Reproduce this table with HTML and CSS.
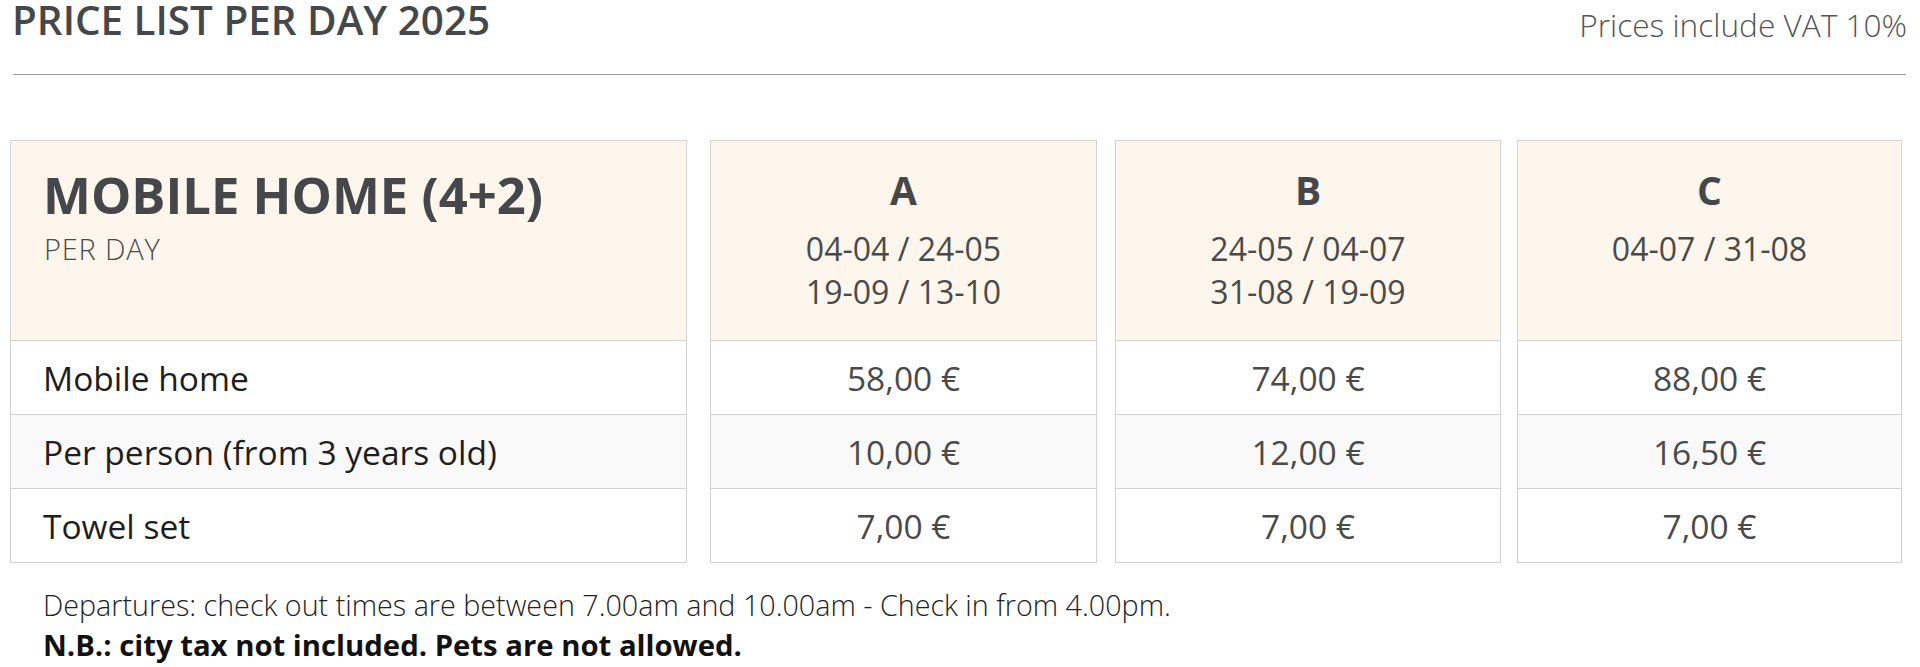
FILE: index.html
```html
<!DOCTYPE html>
<html lang="en">
<head>
<meta charset="utf-8">
<title>Price list per day 2025</title>
<link rel="stylesheet" href="styles.css">
</head>
<body>
<div class="page">
  <header class="top">
    <h1 class="title">PRICE LIST PER DAY 2025</h1>
    <p class="vat">Prices include VAT 10%</p>
  </header>
  <hr class="rule">

  <section class="prices">
    <div class="col col-label">
      <div class="head head-label">
        <h2 class="unit">MOBILE HOME (4+2)</h2>
        <p class="per">PER DAY</p>
      </div>
      <div class="cell label">Mobile home</div>
      <div class="cell label alt">Per person (from 3 years old)</div>
      <div class="cell label last">Towel set</div>
    </div>

    <div class="col col-a">
      <div class="head head-season">
        <div class="season">A</div>
        <div class="dates">04-04 / 24-05<br>19-09 / 13-10</div>
      </div>
      <div class="cell price">58,00 €</div>
      <div class="cell price alt">10,00 €</div>
      <div class="cell price last">7,00 €</div>
    </div>

    <div class="col col-b">
      <div class="head head-season">
        <div class="season">B</div>
        <div class="dates">24-05 / 04-07<br>31-08 / 19-09</div>
      </div>
      <div class="cell price">74,00 €</div>
      <div class="cell price alt">12,00 €</div>
      <div class="cell price last">7,00 €</div>
    </div>

    <div class="col col-c">
      <div class="head head-season">
        <div class="season">C</div>
        <div class="dates">04-07 / 31-08</div>
      </div>
      <div class="cell price">88,00 €</div>
      <div class="cell price alt">16,50 €</div>
      <div class="cell price last">7,00 €</div>
    </div>
  </section>

  <footer class="notes">
    <p class="note">Departures: check out times are between 7.00am and 10.00am - Check in from 4.00pm.</p>
    <p class="note note-strong">N.B.: city tax not included. Pets are not allowed.</p>
  </footer>
</div>
</body>
</html>
```

FILE: styles.css
```css
* {
  box-sizing: border-box;
}

html, body {
  margin: 0;
  padding: 0;
  background: #ffffff;
}

body {
  font-family: "Open Sans", "Noto Sans", "Liberation Sans", sans-serif;
  color: #333333;
}

.page {
  width: 1920px;
}

.top {
  display: flex;
  justify-content: space-between;
  align-items: flex-start;
  margin: 0 13px 0 12px;
  height: 74px;
}

.title {
  margin: 0;
  font-size: 40.4px;
  line-height: 40px;
  font-weight: 600;
  color: #45484b;
}

.vat {
  margin: 0;
  padding-top: 10px;
  font-size: 31.6px;
  line-height: 30px;
  font-weight: 300;
  color: #555555;
}

.rule {
  margin: 0 14px 0 13px;
  border: 0;
  border-top: 1px solid #9a9a9a;
  height: 0;
}

.prices {
  display: flex;
  align-items: flex-start;
  margin-top: 65px;
  padding-left: 10px;
}

.col {
  border: 1px solid #d3d3d3;
  display: flex;
  flex-direction: column;
}

.col-label { width: 677px; }
.col-a { width: 387px; margin-left: 23px; }
.col-b { width: 386px; margin-left: 18px; }
.col-c { width: 385px; margin-left: 16px; }

.head {
  height: 200px;
  background: #fdf6ec;
  border-bottom: 1px solid #d3d3d3;
}

.head-label {
  padding: 29px 0 0 32px;
}

.unit {
  margin: 0;
  font-size: 50.8px;
  line-height: 50px;
  font-weight: 700;
  color: #45474a;
}

.per {
  margin: 14px 0 0 1px;
  font-size: 29px;
  line-height: 29px;
  letter-spacing: 0.8px;
  font-weight: 300;
  color: #4a4a4a;
}

.head-season {
  padding-top: 29px;
  text-align: center;
}

.season {
  font-size: 39px;
  line-height: 39px;
  font-weight: 700;
  color: #45474a;
}

.dates {
  margin-top: 18px;
  font-size: 32px;
  line-height: 43px;
  font-weight: 400;
  color: #4a4a4a;
}

.cell {
  height: 74px;
  display: flex;
  align-items: center;
  font-size: 33.5px;
  border-bottom: 1px solid #d3d3d3;
  background: #ffffff;
}

.cell.alt {
  background: #f9f9f9;
}

.cell.last {
  border-bottom: 0;
  height: 73px;
}

.label {
  padding-left: 32px;
  color: #1e1e1e;
}

.price {
  justify-content: center;
  color: #4a4a4a;
}

.notes {
  margin-top: 22px;
  padding-left: 43px;
}

.note {
  margin: 0;
  font-size: 28.7px;
  line-height: 40px;
  font-weight: 300;
  color: #222222;
}

.note-strong {
  font-size: 29.3px;
  font-weight: 700;
  color: #111111;
}
```
